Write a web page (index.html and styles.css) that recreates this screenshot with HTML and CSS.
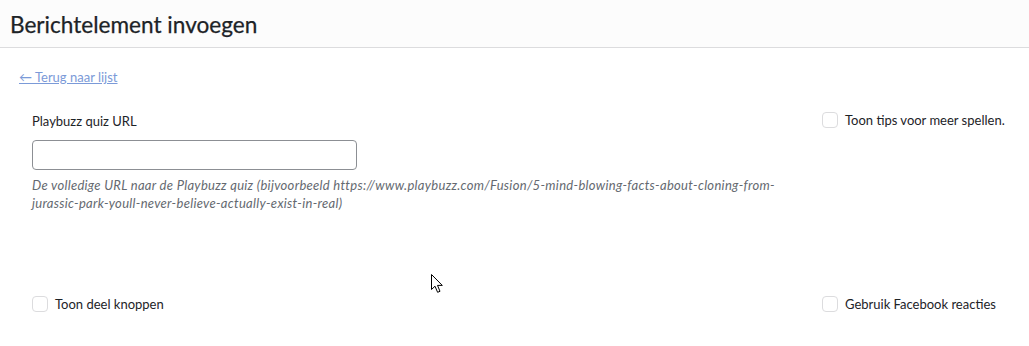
FILE: index.html
```html
<!DOCTYPE html>
<html lang="nl">
<head>
<meta charset="utf-8">
<link rel="stylesheet" href="styles.css">
</head>
<body>
<header class="topbar">
  <h1 class="title">Berichtelement invoegen</h1>
</header>
<main class="content">
  <a class="back" href="#">← Terug naar lijst</a>
  <div class="form">
    <div class="field">
      <label class="label" for="url">Playbuzz quiz URL</label>
      <input class="text-input" id="url" type="text">
      <p class="desc">De volledige URL naar de Playbuzz quiz (bijvoorbeeld https://www.playbuzz.com/Fusion/5-mind-blowing-facts-about-cloning-from-<br>jurassic-park-youll-never-believe-actually-exist-in-real)</p>
    </div>
    <label class="check check-top"><span class="box"></span><span>Toon tips voor meer spellen.</span></label>
    <label class="check check-bottom"><span class="box"></span><span>Toon deel knoppen</span></label>
    <label class="check check-bottom"><span class="box"></span><span>Gebruik Facebook reacties</span></label>
  </div>
  <svg class="cursor" width="14" height="20" viewBox="0 0 14 20"><path d="M0.5 0.5 L0.5 15.5 L4 12.2 L6.6 18.3 L9 17.3 L6.5 11.4 L11.3 11.4 Z" fill="#fff" stroke="#000" stroke-width="1" stroke-linejoin="miter"/></svg>
</main>
</body>
</html>
```
FILE: styles.css
```css
html, body { margin: 0; padding: 0; background: #fff; }
body {
  font-family: Lato, "Open Sans", sans-serif;
  color: #1d2327;
  font-size: 13px;
  line-height: 18px;
  width: 1029px;
  height: 346px;
  overflow: hidden;
}
.topbar {
  background: #fcfcfc;
  border-bottom: 1px solid #dcdcde;
  height: 48px;
  box-sizing: border-box;
  padding: 0 10px;
  display: flex;
  align-items: center;
}
.title {
  margin: 0;
  font-size: 22.6px;
  font-weight: 400;
  line-height: 30px;
  color: #1d2327;
  margin-top: 3px;
  -webkit-text-stroke: 0.25px #1d2327;
}
.content {
  position: relative;
  padding: 20px 0 0 19px;
}
.back {
  display: inline-block;
  color: #7b9ad8;
  text-decoration: underline;
  line-height: 18px;
}
.form {
  display: grid;
  grid-template-columns: 1fr 207px;
  padding-left: 13px;
  margin-top: 26px;
}
.field { min-width: 0; }
.label { display: block; line-height: 18px; }
.text-input {
  display: block;
  margin-top: 10px;
  width: 325px;
  height: 30px;
  box-sizing: border-box;
  border: 1px solid #8c8f94;
  border-radius: 4px;
  background: #fff;
  padding: 0 8px;
  font: inherit;
}
.desc {
  margin: 6px 0 0;
  font-style: italic;
  color: #646970;
  line-height: 18px;
  letter-spacing: 0.3px;
  white-space: nowrap;
}
.check {
  display: flex;
  align-items: center;
  gap: 7px;
  line-height: 18px;
  color: #1d2327;
}
.check-top { align-self: start; margin-top: -1px; }
.check-bottom { margin-top: 83px; }
.box {
  width: 16px;
  height: 16px;
  box-sizing: border-box;
  border: 1px solid #dcdcde;
  border-radius: 4px;
  background: #fff;
  flex: none;
}
.cursor {
  position: absolute;
  left: 431px;
  top: 226px;
}
```
